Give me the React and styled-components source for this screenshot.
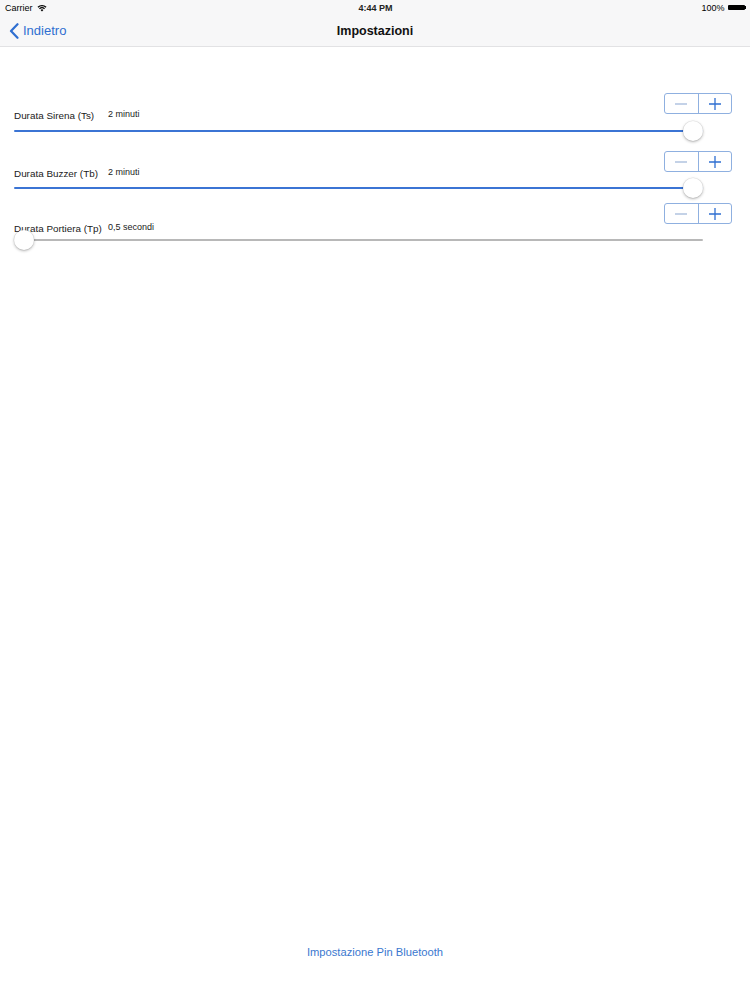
import React from 'react';
import styled, {createGlobalStyle} from 'styled-components';

const GlobalStyle = createGlobalStyle`
    html, body {
        margin: 0;
        padding: 0;
        background: #ffffff;
    }
    body {
        font-family: "Liberation Sans", Arial, sans-serif;
        color: #000000;
    }
`;

const settings = [
    {label: 'Durata Sirena (Ts)', value: '2 minuti', percent: 100, top: 46, labelShift: -5, sliderShift: 0},
    {label: 'Durata Buzzer (Tb)', value: '2 minuti', percent: 100, top: 10, labelShift: -5, sliderShift: -1},
    {label: 'Durata Portiera (Tp)', value: '0,5 secondi', percent: 0, top: 5, labelShift: -2, sliderShift: -4},
];

const Slider = ({percent}) => {
    return (
        <SliderWrap>
            <Track>
                <Fill style={{width: `${percent}%`}} />
            </Track>
            <ThumbRail>
                <Thumb style={{left: `${percent}%`}} />
            </ThumbRail>
        </SliderWrap>
    );
};

const Stepper = () => (
    <StepperBox>
        <StepButton>
            <svg width="14" height="14" viewBox="0 0 14 14">
                <path d="M1 7h12" stroke="#9db4d8" strokeWidth="1.2" />
            </svg>
        </StepButton>
        <StepButton divider>
            <svg width="14" height="14" viewBox="0 0 14 14">
                <path d="M1 7h12M7 1v12" stroke="#2f6fd1" strokeWidth="1.3" />
            </svg>
        </StepButton>
    </StepperBox>
);

export default function App() {
    return (
        <Page>
            <GlobalStyle />
            <Header>
                <StatusBar>
                    <StatusLeft>
                        Carrier
                        <svg width="10" height="8" viewBox="0 0 10 8">
                            <path d="M0.5 2.8a6.5 6.5 0 0 1 9 0L8.6 3.8a5.2 5.2 0 0 0-7.2 0z" fill="#000" />
                            <path d="M2 4.3a4.4 4.4 0 0 1 6 0L7.1 5.3a3.1 3.1 0 0 0-4.2 0z" fill="#000" />
                            <path d="M3.6 5.9a2 2 0 0 1 2.8 0L5 7.4z" fill="#000" />
                        </svg>
                    </StatusLeft>
                    <StatusTime>4:44 PM</StatusTime>
                    <StatusRight>
                        100%
                        <Battery>
                            <BatteryBody />
                            <BatteryTip />
                        </Battery>
                    </StatusRight>
                </StatusBar>
                <NavBar>
                    <BackLink href="#">
                        <svg width="10" height="16" viewBox="0 0 10 16">
                            <path d="M8.5 1.2L2 8l6.5 6.8" stroke="#2f6fd1" strokeWidth="2.2" fill="none" strokeLinecap="round" strokeLinejoin="round" />
                        </svg>
                        Indietro
                    </BackLink>
                    <Title>Impostazioni</Title>
                    <NavSpacer />
                </NavBar>
            </Header>
            <Content>
                {settings.map((item) => (
                    <SettingRow key={item.label} top={item.top}>
                        <StepperLine>
                            <Stepper />
                        </StepperLine>
                        <LabelLine shift={item.labelShift}>
                            <Label>{item.label}</Label>
                            <Value>{item.value}</Value>
                        </LabelLine>
                        <SliderLine shift={item.sliderShift}>
                            <Slider percent={item.percent} />
                        </SliderLine>
                    </SettingRow>
                ))}
            </Content>
            <Footer>
                <FooterLink href="#">Impostazione Pin Bluetooth</FooterLink>
            </Footer>
        </Page>
    );
}

const Page = styled.div`
    min-height: 1000px;
    display: flex;
    flex-direction: column;
    background: #ffffff;
`;

const Header = styled.div`
    background: #f7f7f8;
    border-bottom: 1px solid #e2e2e4;
`;

const StatusBar = styled.div`
    height: 15px;
    display: grid;
    grid-template-columns: 1fr auto 1fr;
    align-items: center;
    padding: 0 4px 0 5px;
    font-size: 9px;
`;

const StatusLeft = styled.div`
    display: flex;
    align-items: center;
    gap: 4px;
`;

const StatusTime = styled.div`
    font-weight: bold;
    font-size: 9px;
    color: #222222;
`;

const StatusRight = styled.div`
    display: flex;
    align-items: center;
    justify-content: flex-end;
    gap: 3px;
`;

const Battery = styled.div`
    display: flex;
    align-items: center;
`;

const BatteryBody = styled.div`
    width: 17px;
    height: 5px;
    background: #000000;
    border-radius: 1px;
`;

const BatteryTip = styled.div`
    width: 1.5px;
    height: 3px;
    background: #000000;
`;

const NavBar = styled.div`
    height: 31px;
    display: grid;
    grid-template-columns: 1fr auto 1fr;
    align-items: center;
    padding: 0 9px;
`;

const BackLink = styled.a`
    display: flex;
    align-items: center;
    gap: 4px;
    color: #2f6fd1;
    font-size: 13px;
    text-decoration: none;
`;

const Title = styled.div`
    font-size: 12.5px;
    font-weight: bold;
    color: #111111;
`;

const NavSpacer = styled.div``;

const Content = styled.div`
    flex: 1;
    display: flex;
    flex-direction: column;
    padding: 0 18px 0 14px;
`;

const SettingRow = styled.div`
    display: flex;
    flex-direction: column;
    margin-top: ${props => props.top}px;
`;

const StepperLine = styled.div`
    display: flex;
    justify-content: flex-end;
`;

const StepperBox = styled.div`
    width: 68px;
    height: 21px;
    box-sizing: border-box;
    border: 1px solid #8fb0e0;
    border-radius: 3px;
    display: flex;
`;

const StepButton = styled.div`
    flex: 1;
    display: flex;
    align-items: center;
    justify-content: center;
    border-left: ${props => props.divider ? '1px solid #8fb0e0' : 'none'};
`;

const LabelLine = styled.div`
    display: flex;
    align-items: center;
    height: 12px;
    margin-top: ${props => props.shift}px;
    position: relative;
    z-index: 0;
`;

const Label = styled.span`
    width: 94px;
    font-size: 9.9px;
    color: #1a1a1a;
`;

const Value = styled.span`
    font-size: 9px;
    color: #1a1a1a;
    margin-top: -2px;
`;

const SliderLine = styled.div`
    margin-top: ${props => props.shift}px;
    width: 689px;
    position: relative;
    z-index: 1;
`;

const SliderWrap = styled.div`
    position: relative;
    height: 20px;
    display: flex;
    align-items: center;
`;

const Track = styled.div`
    width: 100%;
    height: 2px;
    background: #b8b8b8;
    border-radius: 1px;
    overflow: hidden;
`;

const Fill = styled.div`
    height: 100%;
    background: #3b74d4;
`;

const ThumbRail = styled.div`
    position: absolute;
    top: 0;
    left: 10px;
    right: 10px;
    height: 100%;
`;

const Thumb = styled.div`
    position: absolute;
    top: 0;
    width: 20px;
    height: 20px;
    margin-left: -10px;
    border-radius: 50%;
    background: #ffffff;
    box-shadow: 0 1px 3px rgba(0, 0, 0, 0.3), 0 0 0 0.5px rgba(0, 0, 0, 0.08);
`;

const Footer = styled.div`
    display: flex;
    justify-content: center;
    padding-bottom: 41px;
`;

const FooterLink = styled.a`
    font-size: 11.2px;
    line-height: 14px;
    color: #3a78cf;
    text-decoration: none;
`;
